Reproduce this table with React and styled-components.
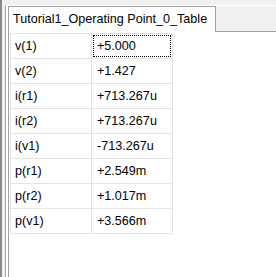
import React from 'react'
import styled, { createGlobalStyle } from 'styled-components'

const Global = createGlobalStyle`
  html, body {
    margin: 0;
    padding: 0;
    background: #f0f0f0;
  }
  body {
    font-family: "Liberation Sans", Arial, sans-serif;
  }
`

const Window = styled.div`
  width: 276px;
  height: 277px;
  display: flex;
  background: #f0f0f0;
  overflow: hidden;
`

const Edge = styled.div`
  width: 2px;
  background: #8a8a8a;
  flex-shrink: 0;
`

const Frame = styled.div`
  flex: 1;
  margin: 5px 0 0 3px;
  border-top: 1px solid #ffffff;
  border-left: 1px solid #a0a0a0;
  display: flex;
  flex-direction: column;
`

const Gap = styled.div`
  flex: 1;
  display: flex;
  flex-direction: column;
  background: #ffffff;
  padding-left: 3px;
`

const TabBar = styled.div`
  display: flex;
  background: #f0f0f0;
  height: 25px;
  border-bottom: 1px solid #a0a0a0;
`

const Tab = styled.div`
  width: 208px;
  height: 26px;
  margin-left: -1px;
  box-sizing: border-box;
  border: 1px solid #a0a0a0;
  border-bottom: none;
  background: #ffffff;
  font-size: 12.6px;
  color: #000;
  padding: 5px 0 0 4px;
  white-space: nowrap;
  position: relative;
  z-index: 1;
`

const Pane = styled.div`
  flex: 1;
  background: #ffffff;
  border-left: 1px solid #a0a0a0;
  margin-left: -1px;
  padding: 1px 0 0 1px;
`

const Grid = styled.table`
  border-collapse: collapse;
  font-size: 12.6px;
  color: #000;
`

const Cell = styled.td`
  width: 81px;
  height: 25px;
  padding: 0 0 0 ${p => (p.$value ? 5 : 4)}px;
  box-sizing: border-box;
  border: 1px solid #e3e3e3;
  position: relative;
`

const Focus = styled.div`
  position: absolute;
  left: 1px;
  top: 1px;
  right: 1px;
  bottom: 1px;
  border: 1px dotted #000;
`

const rows = [
  ['v(1)', '+5.000'],
  ['v(2)', '+1.427'],
  ['i(r1)', '+713.267u'],
  ['i(r2)', '+713.267u'],
  ['i(v1)', '-713.267u'],
  ['p(r1)', '+2.549m'],
  ['p(r2)', '+1.017m'],
  ['p(v1)', '+3.566m'],
]

export default function App() {
  return (
    <Window>
      <Global />
      <Edge />
      <Frame>
        <Gap>
          <TabBar>
            <Tab>Tutorial1_Operating Point_0_Table</Tab>
          </TabBar>
          <Pane>
            <Grid>
              <tbody>
                {rows.map(([name, val], i) => (
                  <tr key={name}>
                    <Cell>{name}</Cell>
                    <Cell $value>
                      {i === 0 && <Focus />}
                      {val}
                    </Cell>
                  </tr>
                ))}
              </tbody>
            </Grid>
          </Pane>
        </Gap>
      </Frame>
    </Window>
  )
}
